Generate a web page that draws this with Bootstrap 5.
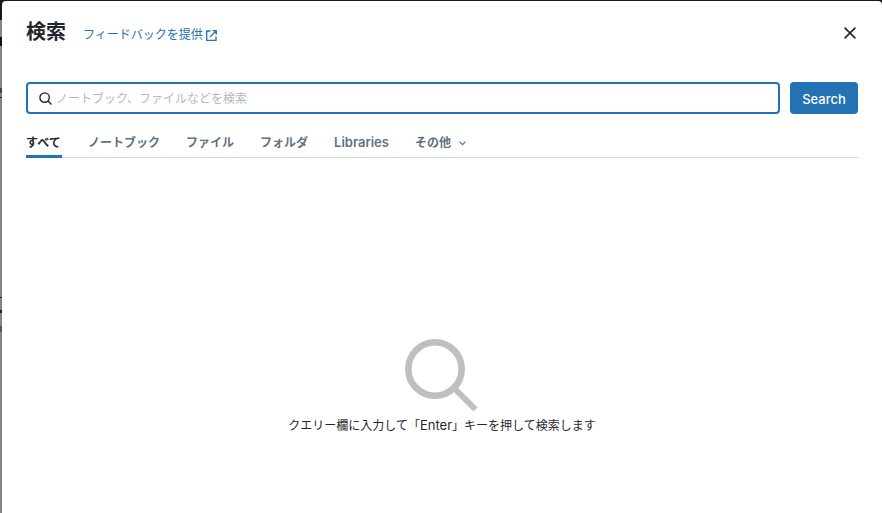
<!DOCTYPE html>
<html lang="ja">
<head>
<meta charset="utf-8">
<meta name="viewport" content="width=device-width, initial-scale=1">
<title>検索</title>
<link href="https://cdn.jsdelivr.net/npm/bootstrap@5.3.0/dist/css/bootstrap.min.css" rel="stylesheet">
<style>
body{font-family:Inter,"Noto Sans CJK JP",sans-serif;font-size:12px;line-height:20px;color:#1f272d;background:linear-gradient(#17191d 20px,#848484 20px 37px,#111 37px 46px,#848484 46px 88px,#444 88px 93px,#848484 93px 97px,#222 97px 98px,#848484 98px 297px,#222 297px 298px,#848484 298px 310px,#222 310px 313px,#848484 313px 326px,#555 326px 332px,#848484 332px);}
.search-dialog{margin:1px 0 0 2px;background:#fff;border-radius:4px 4px 0 0;padding:17px 24px 24px;}
.dialog-title{font-size:20px;line-height:28px;font-weight:700;}
.feedback{color:#2272b4;margin:6px 0 0 17px;gap:3px;}
.close-btn{width:16px;height:16px;color:#1f272d;margin-top:2px;}
.search-row{margin-top:36px;gap:10px;}
.search-box{height:32px;border:2px solid #2272b4;border-radius:4px;padding:0 11px;gap:4px;}
.search-box input{font-size:12px;line-height:20px;color:#1f272d;margin-top:2px;}
.search-box input::placeholder{color:#b5b8ba;opacity:1;}
.search-btn{height:32px;width:68px;font-size:13px;line-height:20px;font-weight:500;color:#fff;background:#2272b4;border-radius:4px;padding:1px 0 0;}
.search-btn:hover{background:#0e538b;color:#fff;}
.type-tabs{margin-top:18px;gap:26px;border-bottom:1px solid #d1d9e1;}
.type-tabs .nav-link{min-width:36px;padding:1px 0 2px;margin-bottom:-1px;border-bottom:3px solid transparent;font-size:12px;line-height:20px;font-weight:600;color:#5f7281;white-space:nowrap;}
.type-tabs .nav-link.active{color:#1f272d;border-color:#2272b4;}
.latin{font-size:13px;line-height:1;}
.empty-state{padding-top:180px;}
</style>
<script defer src="https://cdn.jsdelivr.net/npm/bootstrap@5.3.0/dist/js/bootstrap.bundle.min.js"></script>
</head>
<body class="vh-100 d-flex flex-column">
<main class="search-dialog flex-grow-1" role="dialog" aria-labelledby="dialog-title">
  <header class="d-flex align-items-center">
    <h1 class="dialog-title mb-0" id="dialog-title">検索</h1>
    <a class="feedback d-flex align-items-center text-decoration-none" href="#">フィードバックを提供
      <svg width="11" height="11" viewBox="0 0 11 11" fill="none" stroke="currentColor" stroke-width="1.3" aria-hidden="true"><path d="M4.5 1H.7v9.300H10V6.500M6.500.7h3.800v3.800M10.200.8 4 7"/></svg>
    </a>
    <button class="close-btn btn border-0 p-0 ms-auto d-flex align-items-center justify-content-center" type="button" aria-label="閉じる">
      <svg width="12" height="12" viewBox="0 0 12 12" fill="none" stroke="currentColor" stroke-width="1.6" aria-hidden="true"><path d="m.6.6 10.8 10.8M11.4.6.6 11.4"/></svg>
    </button>
  </header>
  <form class="search-row d-flex" role="search">
    <div class="search-box d-flex align-items-center flex-grow-1">
      <svg class="flex-shrink-0" width="13" height="13" viewBox="0 0 13 13" fill="none" stroke="currentColor" stroke-width="1.4" aria-hidden="true"><circle cx="5.6" cy="5.6" r="4.7"/><path d="m9 9 3.5 3.5"/></svg>
      <input class="form-control border-0 p-0 shadow-none bg-transparent" type="text" aria-label="検索" placeholder="ノートブック、ファイルなどを検索">
    </div>
    <button class="search-btn btn border-0" type="submit">Search</button>
  </form>
  <nav class="type-tabs nav flex-nowrap">
    <a class="nav-link active" aria-current="page" href="#">すべて</a>
    <a class="nav-link" href="#">ノートブック</a>
    <a class="nav-link" href="#">ファイル</a>
    <a class="nav-link" href="#">フォルダ</a>
    <a class="nav-link" href="#"><span class="latin">Libraries</span></a>
    <button class="nav-link bg-transparent border-start-0 border-end-0 border-top-0 d-flex align-items-center" type="button" aria-haspopup="true">その他
      <svg class="ms-2" width="7" height="5" viewBox="0 0 7 5" fill="none" stroke="currentColor" stroke-width="1.2" aria-hidden="true"><path d="m.5.7 3 3 3-3"/></svg>
    </button>
  </nav>
  <section class="empty-state d-flex flex-column align-items-center">
    <svg width="74" height="74" viewBox="0 0 74 74" fill="none" stroke="#bfbfbf" aria-hidden="true"><circle cx="30" cy="31" r="26.7" stroke-width="6.6"/><path d="m49 50 21.5 21.5" stroke-width="6"/></svg>
    <p class="mb-0 mt-1">クエリー欄に入力して「<span class="latin">Enter</span>」キーを押して検索します</p>
  </section>
</main>
</body>
</html>
